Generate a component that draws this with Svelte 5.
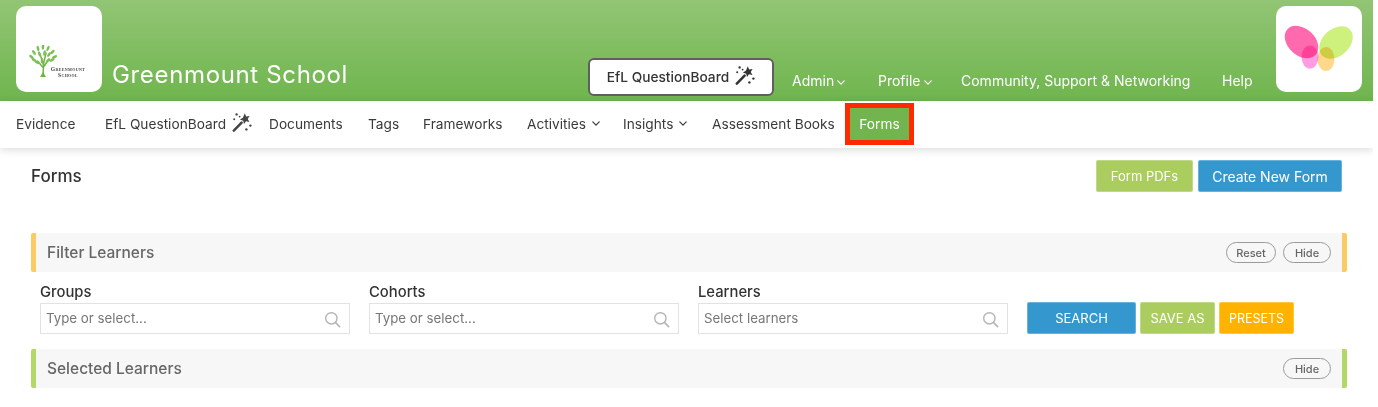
<script>
	const navItems = [
		{ label: 'Evidence', width: 89 },
		{ label: 'EfL QuestionBoard', width: 164, wand: true },
		{ label: 'Documents', width: 99 },
		{ label: 'Tags', width: 55 },
		{ label: 'Frameworks', width: 104 },
		{ label: 'Activities', width: 96, caret: true },
		{ label: 'Insights', width: 89, caret: true },
		{ label: 'Assessment Books', width: 133 }
	];
	const topLinks = [
		{ label: 'Admin', width: 86, caret: true },
		{ label: 'Profile', width: 83, caret: true },
		{ label: 'Community, Support & Networking', width: 261 },
		{ label: 'Help', width: 54 }
	];
	const filters = [
		{ label: 'Groups', placeholder: 'Type or select...' },
		{ label: 'Cohorts', placeholder: 'Type or select...' },
		{ label: 'Learners', placeholder: 'Select learners' }
	];
	// leaves of the school logo tree: x, y, angle
	const leaves = [
		[2.5, 12, -50], [5, 7.5, -35], [5, 15, -60], [9, 3.5, -15], [10.5, 9, -20],
		[14, 2, 5], [15.5, 8, 10], [19, 3.5, 25], [20, 9.5, 35], [23.5, 7, 45],
		[25.5, 12, 60], [23, 15, 65], [8.5, 17.5, -70], [19, 15.5, 50], [13, 15.5, 0]
	];
</script>

{#snippet wand()}
	<svg class="wand" viewBox="0 0 20 20" width="20" height="20" aria-hidden="true">
		<path d="M1.8 18.6 9.6 10.6" stroke="currentColor" stroke-width="2.5" stroke-linecap="round" fill="none" />
		<path d="M12.8 1.2l1.3 3.2 3.5-.5-1.9 3 1.8 3-3.5-.6-2 2.8-.8-3.4-3.3-1.1 3-1.8z" fill="currentColor" />
		<circle cx="4.6" cy="2.4" r="1.2" fill="currentColor" />
		<circle cx="7.6" cy="4.6" r=".9" fill="currentColor" />
		<circle cx="2.2" cy="7.2" r="1" fill="currentColor" />
		<circle cx="18.4" cy="13.6" r="1.2" fill="currentColor" />
		<circle cx="14.4" cy="17.4" r="1.2" fill="currentColor" />
	</svg>
{/snippet}

{#snippet caret()}
	<svg class="caret" viewBox="0 0 10 6" width="8" height="5" aria-hidden="true">
		<path d="M1 1l4 4 4-4" fill="none" stroke="currentColor" stroke-width="1.5" stroke-linecap="round" stroke-linejoin="round" />
	</svg>
{/snippet}

<div class="page">
	<header class="top">
		<div class="tile">
			<div class="school-logo">
				<svg viewBox="0 0 28 33" width="28" height="33" aria-hidden="true">
					<path d="M14 31 L14.5 20 M14.5 23 L8.5 16 M14.5 22 L20 14 M14.5 20 L11 9 M14.5 19 L17 8" stroke="#6fb544" stroke-width="1.5" fill="none" stroke-linecap="round" />
					<path d="M11 32 L14 27 L17 32 Z" fill="#6fb544" />
					{#each leaves as [x, y, a]}
						<ellipse cx={x} cy={y} rx="1.3" ry="2.8" transform="rotate({a} {x} {y})" fill="#7cbf57" />
					{/each}
				</svg>
				<span class="school-mark">Greenmount<br />School</span>
			</div>
		</div>
		<h1>Greenmount School</h1>
		<button class="board-btn">EfL QuestionBoard {@render wand()}</button>
		<nav class="top-links">
			{#each topLinks as link}
				<a href="#top" style="width: {link.width}px">{link.label}{#if link.caret}{@render caret()}{/if}</a>
			{/each}
		</nav>
		<div class="tile butterfly">
			<svg viewBox="0 0 86 86" width="86" height="86" aria-hidden="true">
				<g class="wings">
					<ellipse cx="34" cy="51" rx="8.5" ry="11.5" fill="#ff9ce2" />
					<ellipse cx="50" cy="53" rx="8.5" ry="12" fill="#ffd88c" />
					<ellipse cx="25.5" cy="36" rx="19" ry="13.5" transform="rotate(42 25.5 36)" fill="#ff6aae" />
					<ellipse cx="60" cy="36.5" rx="19" ry="13.5" transform="rotate(-42 60 36.5)" fill="#cef17e" />
				</g>
			</svg>
		</div>
	</header>

	<nav class="sub-nav">
		{#each navItems as item}
			<a href="#top" style="width: {item.width}px">
				{item.label}
				{#if item.wand}{@render wand()}{/if}
				{#if item.caret}{@render caret()}{/if}
			</a>
		{/each}
		<a href="#top" class="current">Forms</a>
	</nav>

	<main>
		<div class="title-row">
			<h2>Forms</h2>
			<div class="actions">
				<button class="btn green">Form PDFs</button>
				<button class="btn blue">Create New Form</button>
			</div>
		</div>

		<section class="bar yellow">
			<h3>Filter Learners</h3>
			<button class="pill">Reset</button>
			<button class="pill">Hide</button>
		</section>

		<div class="filters">
			{#each filters as f}
				<div class="field">
					<span class="field-label">{f.label}</span>
					<div class="input">
						<span>{f.placeholder}</span>
						<svg viewBox="0 0 18 18" width="17" height="17" aria-hidden="true">
							<circle cx="7.8" cy="7.8" r="6" fill="none" stroke="#b5b5b5" stroke-width="1.5" />
							<path d="M12.3 12.3 16.5 16.5" stroke="#b5b5b5" stroke-width="1.7" stroke-linecap="round" />
						</svg>
					</div>
				</div>
			{/each}
			<div class="filter-actions">
				<button class="btn blue search">SEARCH</button>
				<button class="btn green caps">SAVE AS</button>
				<button class="btn orange caps">PRESETS</button>
			</div>
		</div>

		<section class="bar lime">
			<h3>Selected Learners</h3>
			<button class="pill">Hide</button>
		</section>
	</main>
</div>

<style>
	:global(body) {
		margin: 0;
		background: #fff;
	}

	.page {
		width: 1373px;
		height: 407px;
		overflow: hidden;
		font-family: Inter, "Open Sans", sans-serif;
		color: #333;
	}

	button {
		font-family: inherit;
		cursor: pointer;
	}

	a {
		text-decoration: none;
		color: inherit;
	}

	.top {
		height: 101px;
		box-sizing: border-box;
		padding: 6px 12px 0 16px;
		display: flex;
		align-items: flex-start;
		background: linear-gradient(#92c574, #6fb54e);
		color: #fff;
	}

	.tile {
		width: 86px;
		height: 86px;
		flex: none;
		background: #fff;
		border-radius: 10px;
		box-sizing: border-box;
	}

	.school-logo {
		position: relative;
		height: 100%;
		padding: 39px 0 0 13px;
		box-sizing: border-box;
	}

	.school-mark {
		position: absolute;
		left: 32px;
		top: 60px;
		width: 40px;
		font-family: "Liberation Serif", serif;
		font-size: 5.6px;
		line-height: 6px;
		font-weight: 700;
		font-variant: small-caps;
		letter-spacing: 0.35px;
		text-align: center;
		color: #444;
	}

	.wings {
		isolation: isolate;
	}

	.wings ellipse {
		mix-blend-mode: multiply;
	}

	h1 {
		margin: 54px 0 0 10px;
		width: 476px;
		flex: none;
		font-size: 24px;
		line-height: 30px;
		font-weight: 400;
		letter-spacing: 0.65px;
	}

	.board-btn {
		margin: 52px 0 0 0;
		width: 186px;
		height: 38px;
		flex: none;
		display: flex;
		align-items: center;
		justify-content: center;
		gap: 6px;
		background: #fff;
		border: 2px solid #5f5f5f;
		border-radius: 6px;
		color: #333;
		font-size: 13.7px;
		font-weight: 500;
	}

	.board-btn .wand {
		margin-top: -4px;
	}

	.top-links {
		display: flex;
		margin: 65px 0 0 18px;
		font-size: 14px;
		line-height: 20px;
		white-space: nowrap;
		width: 484px;
		flex: none;
	}

	.top-links a {
		display: block;
		flex: none;
	}

	.top-links .caret {
		margin-left: 3px;
		vertical-align: 1px;
	}

	.sub-nav {
		height: 47px;
		box-sizing: border-box;
		padding: 0 0 2px 16px;
		display: flex;
		align-items: center;
		background: #fff;
		box-shadow: 0 2px 8px rgba(0, 0, 0, 0.14);
		font-size: 13.7px;
		color: #3a3a3a;
		position: relative;
		white-space: nowrap;
	}

	.sub-nav a {
		flex: none;
		display: flex;
		align-items: center;
		gap: 6px;
	}

	.sub-nav .current {
		box-sizing: border-box;
		width: 69px;
		height: 42px;
		justify-content: center;
		background: #72b54f;
		border: 5px solid #ff2a00;
		color: #fff;
		margin-top: 1px;
	}

	.sub-nav .wand {
		margin-top: -4px;
		color: #444;
	}

	main {
		padding: 12px 26px 0 31px;
	}

	.title-row {
		display: flex;
		justify-content: space-between;
		align-items: flex-start;
		height: 73px;
	}

	h2 {
		margin: 5px 0 0;
		font-size: 17px;
		line-height: 22px;
		font-weight: 500;
		color: #333;
	}

	.actions {
		display: flex;
		gap: 5px;
		margin-right: 5px;
	}

	.btn {
		height: 32px;
		border: 1px solid rgba(255, 255, 255, 0.25);
		border-radius: 2px;
		color: #fff;
		font-size: 13px;
		padding: 0;
	}

	.green {
		background: #abcd60;
		width: 97px;
	}

	.blue {
		background: #3498cf;
		width: 144px;
		font-size: 14px;
	}

	.orange {
		background: #ffb300;
	}

	.bar {
		height: 39px;
		box-sizing: border-box;
		display: flex;
		align-items: center;
		gap: 7px;
		padding: 0 11px 0 11px;
		background: #f7f7f7;
		border-left: 5px solid;
		border-right: 5px solid;
		border-radius: 2px;
	}

	.bar.yellow {
		border-color: #fbcb63;
	}

	.bar.lime {
		border-color: #b2d968;
	}

	h3 {
		margin: 0 auto 0 0;
		font-size: 15.5px;
		font-weight: 500;
		color: #666;
	}

	.pill {
		height: 21px;
		box-sizing: border-box;
		padding: 0;
		width: 50px;
		background: transparent;
		border: 1.5px solid #9a9a9a;
		border-radius: 11px;
		font-size: 11px;
		font-weight: 500;
		color: #666;
	}

	.pill:last-child {
		width: 48px;
	}

	.filters {
		height: 77px;
		box-sizing: border-box;
		padding: 10px 0 0 9px;
		display: flex;
		align-items: flex-start;
		gap: 19px;
	}

	.field {
		width: 310px;
		flex: none;
	}

	.field-label {
		display: block;
		margin-bottom: 1px;
		font-size: 14.8px;
		line-height: 20px;
		font-weight: 500;
		color: #333;
	}

	.input {
		height: 31px;
		box-sizing: border-box;
		display: flex;
		align-items: center;
		justify-content: space-between;
		padding: 0 8px 1px 5px;
		border: 1.5px solid #e2e2e2;
		font-size: 13.3px;
		color: #777;
	}

	.input svg {
		margin-top: 3px;
	}

	.filter-actions {
		display: flex;
		gap: 4px;
		margin-top: 20px;
	}

	.search {
		width: 109px;
		font-size: 13px;
	}

	.caps {
		width: 75px;
		font-size: 13px;
	}

	.orange.caps {
		font-size: 12.5px;
	}
</style>
